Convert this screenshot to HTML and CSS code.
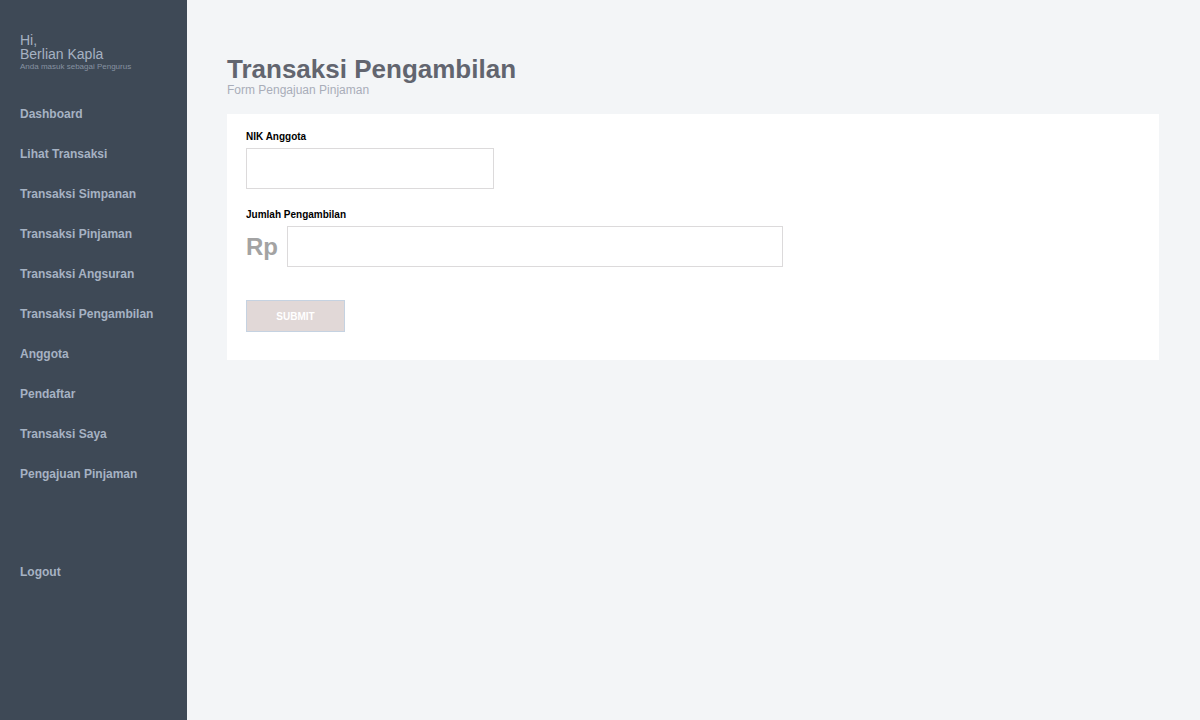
FILE: index.html
```html
<!DOCTYPE html>
<html lang="id">
<head>
<meta charset="utf-8">
<meta name="viewport" content="width=device-width, initial-scale=1">
<title>Transaksi Pengambilan</title>
<link rel="stylesheet" href="styles.css">
</head>
<body>
<div class="layout">
  <aside class="sidebar">
    <div class="profile">
      <p class="profile-name">Hi,<br>Berlian Kapla</p>
      <p class="profile-role">Anda masuk sebagai Pengurus</p>
    </div>
    <nav class="menu">
      <a href="#">Dashboard</a>
      <a href="#">Lihat Transaksi</a>
      <a href="#">Transaksi Simpanan</a>
      <a href="#">Transaksi Pinjaman</a>
      <a href="#">Transaksi Angsuran</a>
      <a href="#">Transaksi Pengambilan</a>
      <a href="#">Anggota</a>
      <a href="#">Pendaftar</a>
      <a href="#">Transaksi Saya</a>
      <a href="#">Pengajuan Pinjaman</a>
      <a href="#" class="logout">Logout</a>
    </nav>
  </aside>
  <main class="content">
    <h1 class="title">Transaksi Pengambilan</h1>
    <p class="subtitle">Form Pengajuan Pinjaman</p>
    <form class="card">
      <div class="field">
        <label for="nik">NIK Anggota</label>
        <input class="input input-nik" id="nik" type="text">
      </div>
      <div class="field">
        <label for="jumlah">Jumlah Pengambilan</label>
        <div class="amount">
          <span class="currency">Rp</span>
          <input class="input input-amount" id="jumlah" type="text">
        </div>
      </div>
      <button class="submit" type="submit">SUBMIT</button>
    </form>
  </main>
</div>
</body>
</html>
```
FILE: styles.css
```css
* {
  box-sizing: border-box;
}

body {
  margin: 0;
  background: #f3f5f7;
  font-family: "Liberation Sans", Arial, sans-serif;
}

.layout {
  display: flex;
  min-height: 100vh;
}

.sidebar {
  flex: none;
  padding: 33px 20px;
  width: 187px;
  background: #3e4956;
  color: #a6b2c3;
}

.profile-name,
.profile-role {
  margin: 0;
}

.profile-name {
  font-size: 14px;
  line-height: 14px;
}

.profile-role {
  color: #8692a1;
  font-size: 8px;
  line-height: 12px;
}

.menu {
  display: flex;
  flex-direction: column;
  margin-top: 21px;
}

.menu a {
  color: inherit;
  font-size: 12px;
  font-weight: bold;
  line-height: 40px;
  text-decoration: none;
  white-space: nowrap;
}

.menu .logout {
  margin-top: 58px;
}

.content {
  flex: 1;
  min-width: 0;
  padding: 54px 41px 40px 40px;
}

.title {
  margin: 0;
  color: #62656f;
  font-size: 26px;
  line-height: 30px;
}

.subtitle {
  margin: 0 0 17px;
  color: #a9adb9;
  font-size: 12px;
  line-height: 13px;
}

.card {
  padding: 17px 19px 28px;
  background: #fff;
}

.field {
  display: flex;
  flex-direction: column;
  align-items: flex-start;
  margin-bottom: 20px;
}

.field label {
  margin-bottom: 5px;
  font-size: 10px;
  font-weight: bold;
  line-height: 12px;
}

.input {
  padding: 0 12px;
  height: 41px;
  border: 1px solid #dcdadb;
  background: #fff;
  font: inherit;
}

.input-nik {
  width: 248px;
  max-width: 100%;
}

.amount {
  display: flex;
  align-items: center;
  gap: 9px;
  width: 537px;
  max-width: 100%;
}

.currency {
  color: #a3a3a3;
  font-size: 24px;
  font-weight: bold;
}

.input-amount {
  flex: 1;
  min-width: 0;
}

.submit {
  display: block;
  margin-top: 33px;
  padding: 0;
  width: 99px;
  height: 32px;
  border: 1px solid #c5d2e1;
  background: #e1d8d7;
  color: #fff;
  font: bold 10px "Liberation Sans", Arial, sans-serif;
}
```
